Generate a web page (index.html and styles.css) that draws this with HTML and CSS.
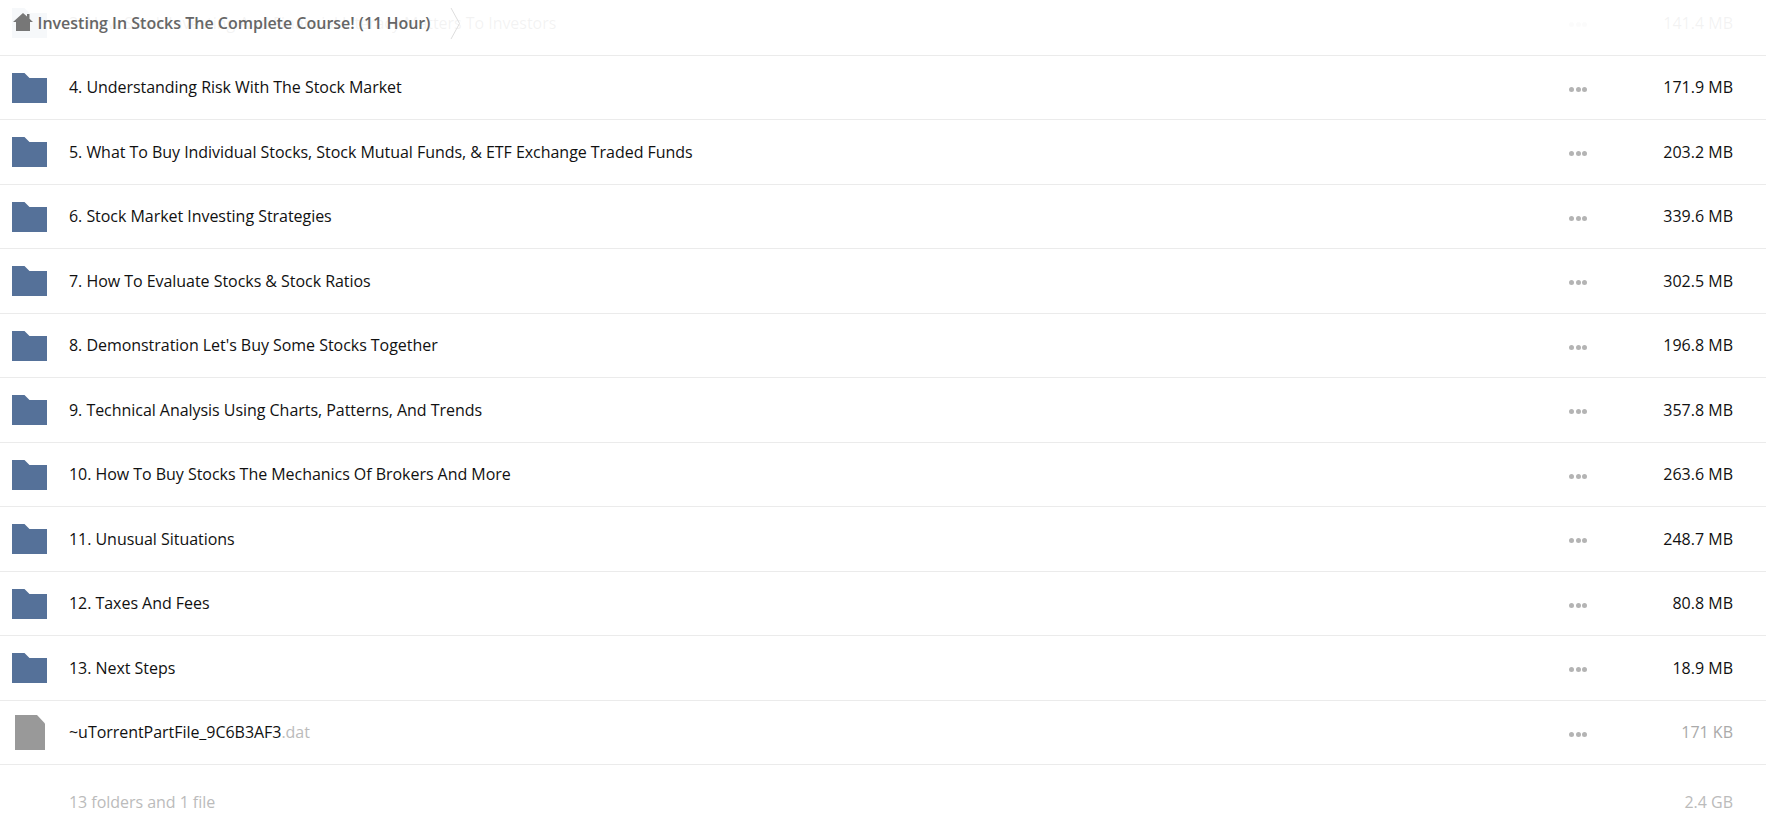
FILE: index.html
```html
<!DOCTYPE html>
<html lang="en">
<head>
<meta charset="utf-8">
<title>Investing In Stocks The Complete Course! (11 Hour)</title>
<link rel="stylesheet" href="styles.css">
</head>
<body>
<header class="crumb">
  <svg class="home" viewBox="0 0 20 18" aria-hidden="true"><path d="M10 0 L14 3.600 V1 H16.500 V5.800 L20 9 H17 V18 H3 V9 H0 Z"/></svg>
  <span class="crumb-title">Investing In Stocks The Complete Course! (11 Hour)</span>
  <svg class="chevron" viewBox="0 0 10 31" aria-hidden="true"><path d="M1 0 L9.500 15.500 L1 31"/></svg>
</header>
<main class="list">
  <div class="row"><svg class="icon folder" viewBox="0 0 35 30"><path d="M0 0 H12.500 L17.500 5 H35 V30 H0 Z"/></svg><span class="name">3. How Stock Investing And Financial Literacy Matters To Investors</span><span class="dots"><i></i><i></i><i></i></span><span class="size">141.4 MB</span></div>
  <div class="row"><svg class="icon folder" viewBox="0 0 35 30"><path d="M0 0 H12.500 L17.500 5 H35 V30 H0 Z"/></svg><span class="name">4. Understanding Risk With The Stock Market</span><span class="dots"><i></i><i></i><i></i></span><span class="size">171.9 MB</span></div>
  <div class="row"><svg class="icon folder" viewBox="0 0 35 30"><path d="M0 0 H12.500 L17.500 5 H35 V30 H0 Z"/></svg><span class="name">5. What To Buy Individual Stocks, Stock Mutual Funds, &amp; ETF Exchange Traded Funds</span><span class="dots"><i></i><i></i><i></i></span><span class="size">203.2 MB</span></div>
  <div class="row"><svg class="icon folder" viewBox="0 0 35 30"><path d="M0 0 H12.500 L17.500 5 H35 V30 H0 Z"/></svg><span class="name">6. Stock Market Investing Strategies</span><span class="dots"><i></i><i></i><i></i></span><span class="size">339.6 MB</span></div>
  <div class="row"><svg class="icon folder" viewBox="0 0 35 30"><path d="M0 0 H12.500 L17.500 5 H35 V30 H0 Z"/></svg><span class="name">7. How To Evaluate Stocks &amp; Stock Ratios</span><span class="dots"><i></i><i></i><i></i></span><span class="size">302.5 MB</span></div>
  <div class="row"><svg class="icon folder" viewBox="0 0 35 30"><path d="M0 0 H12.500 L17.500 5 H35 V30 H0 Z"/></svg><span class="name">8. Demonstration Let's Buy Some Stocks Together</span><span class="dots"><i></i><i></i><i></i></span><span class="size">196.8 MB</span></div>
  <div class="row"><svg class="icon folder" viewBox="0 0 35 30"><path d="M0 0 H12.500 L17.500 5 H35 V30 H0 Z"/></svg><span class="name">9. Technical Analysis Using Charts, Patterns, And Trends</span><span class="dots"><i></i><i></i><i></i></span><span class="size">357.8 MB</span></div>
  <div class="row"><svg class="icon folder" viewBox="0 0 35 30"><path d="M0 0 H12.500 L17.500 5 H35 V30 H0 Z"/></svg><span class="name">10. How To Buy Stocks The Mechanics Of Brokers And More</span><span class="dots"><i></i><i></i><i></i></span><span class="size">263.6 MB</span></div>
  <div class="row"><svg class="icon folder" viewBox="0 0 35 30"><path d="M0 0 H12.500 L17.500 5 H35 V30 H0 Z"/></svg><span class="name">11. Unusual Situations</span><span class="dots"><i></i><i></i><i></i></span><span class="size">248.7 MB</span></div>
  <div class="row"><svg class="icon folder" viewBox="0 0 35 30"><path d="M0 0 H12.500 L17.500 5 H35 V30 H0 Z"/></svg><span class="name">12. Taxes And Fees</span><span class="dots"><i></i><i></i><i></i></span><span class="size">80.8 MB</span></div>
  <div class="row"><svg class="icon folder" viewBox="0 0 35 30"><path d="M0 0 H12.500 L17.500 5 H35 V30 H0 Z"/></svg><span class="name">13. Next Steps</span><span class="dots"><i></i><i></i><i></i></span><span class="size">18.9 MB</span></div>
  <div class="row row-file"><svg class="icon file" viewBox="0 0 30 35"><path d="M0 0 H22 L30 8.500 V35 H0 Z"/></svg><span class="name">~uTorrentPartFile_9C6B3AF3<span class="ext">.dat</span></span><span class="dots"><i></i><i></i><i></i></span><span class="size muted">171 KB</span></div>
  <div class="row summary"><span class="icon blank"></span><span class="name">13 folders and 1 file</span><span class="dots"></span><span class="size">2.4 GB</span></div>
</main>
</body>
</html>
```
FILE: styles.css
```css
html, body { margin: 0; padding: 0; background: #fff; overflow: hidden; height: 100%; }
body { font-family: "Open Sans", "Liberation Sans", sans-serif; font-size: 16px; color: #111; position: relative; }
.list { margin-top: -9px; }
.row { display: flex; align-items: center; height: 64.5px; box-sizing: border-box; border-bottom: 1px solid #ebebeb; padding: 0 33px 0 12px; }
.row.summary { border-bottom: 0; color: #bbb; padding-top: 9px; }
.icon { flex: none; }
.folder { width: 35px; height: 30px; margin: 1px 22px 0 0; fill: #557199; }
.file { width: 30px; height: 35px; margin: 0 24px 0 3px; fill: #999; }
.blank { width: 57px; }
.name { flex: 1; letter-spacing: -0.04px; }
.ext { color: #bbb; }
.dots { display: flex; gap: 1.5px; width: 18px; flex: none; margin-right: 64px; padding-top: 4px; }
.dots i { width: 5px; height: 5px; border-radius: 50%; background: #b4b4b4; }
.size { width: 82px; text-align: right; flex: none; }
.muted { color: #aaa; }
.crumb { position: absolute; top: 0; left: 0; right: 0; height: 55px; background: rgba(255,255,255,.95); display: flex; align-items: center; z-index: 2; padding-left: 13px; box-sizing: border-box; }
.home { width: 20px; height: 18px; fill: #777; flex: none; margin-right: 4.5px; margin-top: -11px; }
.crumb-title { font-weight: 600; color: #666; margin-top: -10px; }
.chevron { width: 10px; height: 31px; fill: none; stroke: #ddd; stroke-width: 1; margin-left: 19.5px; margin-top: -9px; flex: none; }
```
